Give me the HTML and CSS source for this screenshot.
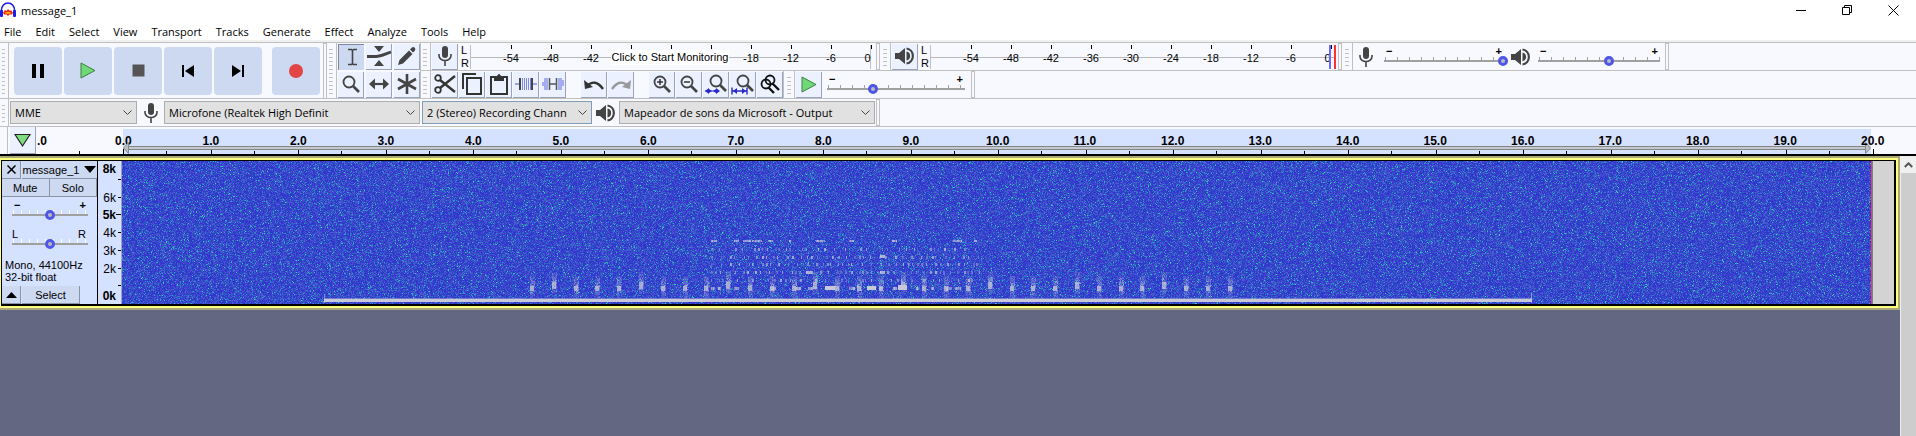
FILE: index.html
```html
<!DOCTYPE html>
<html lang="en">
<head>
<meta charset="utf-8">
<title>message_1</title>
<link rel="stylesheet" href="styles.css">
</head>
<body>
<svg class="defs" aria-hidden="true">
  <symbol id="mic" viewBox="0 0 14 20"><rect x="4" y="0" width="6" height="12" rx="3" fill="#444"/><path d="M1 8v1.500a6 5 0 0 0 12 0V8M7 15v5" fill="none" stroke="#444" stroke-width="1.600"/></symbol>
  <symbol id="speaker" viewBox="0 0 19 18"><path d="M0 6h4l6-5v16l-6-5H0z" fill="#444"/><path d="M11.500 4.500a4.600 4.600 0 0 1 0 9z" fill="#444"/><path d="M11.500 1.500a7.600 7.600 0 0 1 0 15" fill="none" stroke="#444" stroke-width="2.200"/></symbol>
  <symbol id="play" viewBox="0 0 16 17"><path d="M1 1l14 7.500L1 16z" fill="#6fd877" stroke="#3f7f45"/></symbol>
  <symbol id="lens" viewBox="0 0 20 20"><circle cx="8" cy="8" r="5.500" fill="none" stroke="#444" stroke-width="1.800"/><path d="M12 12l6 6" stroke="#444" stroke-width="2.600"/></symbol>
</svg>

<header class="titlebar">
  <svg class="logo" width="16" height="16" viewBox="0 0 16 16"><path d="M1.500 10V8a6.500 7 0 0 1 13 0v2" fill="none" stroke="#1d1de0" stroke-width="1.600"/><rect x="0" y="8" width="3" height="7" rx="1" fill="#1d1de0"/><rect x="13" y="8" width="3" height="7" rx="1" fill="#1d1de0"/><path d="M3 11l2-3 1.500 1L8 7l2 2 1-1 2 3-2 2-1-1-2 2-2-2-1 1z" fill="#f01b12"/><path d="M4 11l4-1.500 4 1.500-4 1z" fill="#ffb300"/></svg>
  <h1>message_1</h1>
  <div class="winbtns">
    <button aria-label="Minimize"><svg width="11" height="11"><path d="M0 5.500h10" stroke="#000"/></svg></button>
    <button aria-label="Restore"><svg width="11" height="11"><path d="M.5 2.500h7v7h-7zM2.500 2.500v-2h7v7h-2" fill="none" stroke="#000"/></svg></button>
    <button aria-label="Close"><svg width="11" height="11"><path d="M.5.5l10 10M10.500.5l-10 10" stroke="#000"/></svg></button>
  </div>
</header>
<nav class="menu">
  <button>File</button><button>Edit</button><button>Select</button><button>View</button><button>Transport</button><button>Tracks</button><button>Generate</button><button>Effect</button><button>Analyze</button><button>Tools</button><button>Help</button>
</nav>

<div class="dock">
  <div class="bar transport">
    <i class="grip"></i>
    <div class="big-buttons">
      <button aria-label="Pause"><svg width="14" height="14"><path d="M1 0h4v14H1zM9 0h4v14H9z"/></svg></button>
      <button aria-label="Play"><svg width="16" height="17"><use href="#play"/></svg></button>
      <button aria-label="Stop"><svg width="13" height="13"><path d="M.5.5h12v12H.5z" fill="#555"/></svg></button>
      <button aria-label="Skip to start"><svg width="14" height="14"><path d="M1 1h2v12H1zM13 1v12L4 7z"/></svg></button>
      <button aria-label="Skip to end"><svg width="14" height="14"><path d="M11 1h2v12h-2zM1 1v12l9-6z"/></svg></button>
      <button class="record" aria-label="Record"><svg width="14" height="14"><circle cx="7" cy="7" r="7" fill="#e24545"/></svg></button>
    </div>
  </div>
  <div class="bar tools">
    <i class="grip"></i>
    <div class="tool-grid">
      <button class="tb on" aria-label="Selection tool"><svg width="20" height="20"><path d="M6 2.500h3.500l1 1 1-1H15M6 17.500h3.500l1-1 1 1H15M10.500 3v14" fill="none" stroke="#444" stroke-width="1.600"/></svg></button>
      <button class="tb" aria-label="Envelope tool"><svg width="24" height="20"><path d="M7 0h10l-5 6zM7 20h10l-5-6z" fill="#444"/><path d="M0 10.500h9C14 10.500 18 8 24 6" fill="none" stroke="#444" stroke-width="2.800"/></svg></button>
      <button class="tb" aria-label="Draw tool"><svg width="20" height="20"><path d="M1 19l1.500-5L12 4.500 15.500 8 6 17.500zM13 3.500l2-2q1.500-1 2.700.3t.3 2.700l-2 2z" fill="#444"/></svg></button>
      <button class="tb" aria-label="Zoom tool"><svg width="20" height="20"><use href="#lens"/></svg></button>
      <button class="tb" aria-label="Time shift tool"><svg width="22" height="14"><path d="M5 7h12" stroke="#444" stroke-width="2.200"/><path d="M1 7l6-5.500v11zM21 7l-6-5.500v11z" fill="#444"/></svg></button>
      <button class="tb" aria-label="Multi tool"><svg width="20" height="20"><path d="M10 0v20M1 5l18 10M1 15l18-10" stroke="#444" stroke-width="2.600"/></svg></button>
    </div>
  </div>
  <div class="rows">
    <div class="row">
      <div class="bar">
        <i class="grip"></i>
        <button class="tb" aria-label="Record meter"><svg width="14" height="20"><use href="#mic"/></svg></button>
        <div class="lr"><span>L</span><span>R</span></div>
        <div class="meter">
          <span>-54</span><span>-48</span><span>-42</span><span>-36</span><span>-30</span><span>-24</span><span>-18</span><span>-12</span><span>-6</span><span class="zero">0</span>
          <button class="monitor">Click to Start Monitoring</button>
        </div>
      </div>
      <div class="bar">
        <i class="grip"></i>
        <button class="tb" aria-label="Playback meter"><svg width="19" height="18"><use href="#speaker"/></svg></button>
        <div class="lr"><span>L</span><span>R</span></div>
        <div class="meter play-meter">
          <span>-54</span><span>-48</span><span>-42</span><span>-36</span><span>-30</span><span>-24</span><span>-18</span><span>-12</span><span>-6</span><span class="zero">0</span>
          <i class="peak"></i><i class="clip"></i>
        </div>
      </div>
      <div class="bar mixer">
        <i class="grip"></i>
        <svg class="mix-mic" width="14" height="20"><use href="#mic"/></svg>
        <label class="slider rec"><span class="ends"><b>−</b><b>+</b></span><input type="range" min="0" max="100" value="100" aria-label="Recording volume"></label>
        <svg class="mix-spk" width="19" height="18"><use href="#speaker"/></svg>
        <label class="slider out"><span class="ends"><b>−</b><b>+</b></span><input type="range" min="0" max="100" value="59" aria-label="Playback volume"></label>
      </div>
    </div>
    <div class="row">
      <div class="bar edit">
        <i class="grip"></i>
        <div class="group">
          <button class="tb" aria-label="Cut"><svg width="22" height="20"><path d="M6 6l15 12M6 14L21 2" stroke="#333" stroke-width="2.400"/><circle cx="4" cy="4" r="2.800" fill="none" stroke="#333" stroke-width="1.800"/><circle cx="4" cy="16" r="2.800" fill="none" stroke="#333" stroke-width="1.800"/></svg></button>
          <button class="tb" aria-label="Copy"><svg width="20" height="22"><path d="M1 16V1h13M5 5h14v16H5z" fill="none" stroke="#333" stroke-width="2"/></svg></button>
          <button class="tb" aria-label="Paste"><svg width="20" height="22"><path d="M2 4h16v17H2z" fill="none" stroke="#333" stroke-width="2"/><path d="M5 3h3q2-4 4 0h3v5H5z" fill="#333"/></svg></button>
          <button class="tb" aria-label="Trim"><svg width="22" height="16"><path d="M0 8h5M17 8h5" stroke="#7d8ae8" stroke-width="1.500"/><path d="M5 2v12M17 2v12" stroke="#444" stroke-width="2"/><path d="M7.500 2v12M9.500 2v12M11.500 2v12M13.500 2v12M15.500 2v12" stroke="#7d8ae8"/></svg></button>
          <button class="tb" aria-label="Silence"><svg width="22" height="16"><path d="M1 10V6M3 14V2M5 14V2M17 14V2M19 14V2M21 10V4" stroke="#7d8ae8" stroke-width="1.300"/><path d="M7.500 2v12M14.500 2v12M8 8h6" stroke="#555" stroke-width="1.500"/></svg></button>
        </div>
        <div class="group">
          <button class="tb" aria-label="Undo"><svg width="22" height="14"><path d="M4 9q8-8 16 3" fill="none" stroke="#333" stroke-width="2.400"/><path d="M1 3l1 9 8-2z" fill="#333"/></svg></button>
          <button class="tb" aria-label="Redo"><svg width="22" height="14"><path d="M18 9Q10 1 2 12" fill="none" stroke="#999" stroke-width="2.400"/><path d="M21 3l-1 9-8-2z" fill="#999"/></svg></button>
        </div>
        <div class="group">
          <button class="tb" aria-label="Zoom in"><svg width="20" height="20"><use href="#lens"/><path d="M5 8h6M8 5v6" stroke="#333" stroke-width="1.500"/></svg></button>
          <button class="tb" aria-label="Zoom out"><svg width="20" height="20"><use href="#lens"/><path d="M5 8h6" stroke="#333" stroke-width="1.500"/></svg></button>
          <button class="tb" aria-label="Fit selection"><svg width="24" height="22"><g transform="translate(4)"><use href="#lens" width="20" height="20"/></g><path d="M1 18h14" stroke="#2a2ac8"/><path d="M1 18l4-3v6zM8 18l-3-2v4zM9 18l3-2v4zM16 18l-4-3v6z" fill="#2a2ac8"/></svg></button>
          <button class="tb" aria-label="Fit project"><svg width="24" height="22"><g transform="translate(4)"><use href="#lens" width="20" height="20"/></g><path d="M1 18h15M1 14.500v7M16 14.500v7" stroke="#2a2ac8" stroke-width="1.400"/><path d="M2 18l4-3v6zM15 18l-4-3v6z" fill="#2a2ac8"/></svg></button>
          <button class="tb" aria-label="Zoom toggle"><svg width="20" height="20" fill="none" stroke="#111" stroke-width="1.800"><circle cx="10" cy="6" r="4.500"/><circle cx="6" cy="10" r="4.500"/><path d="M12 9l7 7M8 13l6 6" stroke-width="2.400"/></svg></button>
        </div>
      </div>
      <div class="bar speed">
        <i class="grip"></i>
        <button class="tb" aria-label="Play at speed"><svg width="16" height="17"><use href="#play"/></svg></button>
        <label class="slider spd"><span class="ends"><b>−</b><b>+</b></span><input type="range" min="0" max="100" value="32" aria-label="Playback speed"></label>
      </div>
    </div>
  </div>
</div>
<div class="row devices">
  <div class="bar">
    <i class="grip"></i>
    <select class="host" aria-label="Audio host"><option>MME</option></select>
    <svg class="dev-mic" width="14" height="20"><use href="#mic"/></svg>
    <select class="wide" aria-label="Recording device"><option>Microfone (Realtek High Definit</option></select>
    <select class="chan" aria-label="Recording channels"><option>2 (Stereo) Recording Chann</option></select>
    <svg class="dev-spk" width="19" height="18"><use href="#speaker"/></svg>
    <select class="wide" aria-label="Playback device"><option>Mapeador de sons da Microsoft - Output</option></select>
  </div>
</div>

<div class="timeline">
  <div class="pin"><button class="tb" aria-label="Pinned play head"><svg width="17" height="15"><path d="M1 1.500h15L8.500 13z" fill="#7fdc80" stroke="#222" stroke-width="1.200"/></svg></button></div>
  <div class="lead"><span>.0</span></div>
  <div class="ruler">
    <div class="seconds"><span>0.0</span><span>1.0</span><span>2.0</span><span>3.0</span><span>4.0</span><span>5.0</span><span>6.0</span><span>7.0</span><span>8.0</span><span>9.0</span><span>10.0</span><span>11.0</span><span>12.0</span><span>13.0</span><span>14.0</span><span>15.0</span><span>16.0</span><span>17.0</span><span>18.0</span><span>19.0</span></div>
    <div class="loop"><svg width="6" height="12"><path d="M5.500.5v11L.5 6z" fill="#c0c0c0" stroke="#888"/></svg><i></i><svg width="6" height="12"><path d="M.5.5v11L5.500 6z" fill="#c0c0c0" stroke="#888"/></svg></div>
  </div>
  <div class="tail"><span>20.0</span></div>
</div>

<main class="workspace">
  <div class="tracks">
    <section class="track">
      <div class="panel">
        <div class="pair head"><button aria-label="Close track"><svg width="9" height="9"><path d="M.5.5l8 8M8.500.5l-8 8" stroke="#000" stroke-width="1.500"/></svg></button><button class="name">message_1<svg width="12" height="7"><path d="M0 0h12L6 7z"/></svg></button></div>
        <div class="pair half"><button>Mute</button><button>Solo</button></div>
        <label class="slider trk"><span class="ends"><b>−</b><b>+</b></span><input type="range" value="50" aria-label="Gain"></label>
        <label class="slider trk pan"><span class="ends"><span>L</span><span>R</span></span><input type="range" value="50" aria-label="Pan"></label>
        <p>Mono, 44100Hz<br>32-bit float</p>
        <div class="pair foot"><button aria-label="Collapse"><svg width="11" height="6"><path d="M0 6h11L5.500 0z"/></svg></button><button class="sel">Select</button></div>
      </div>
      <svg class="freq" width="24" height="143" text-anchor="end">
        <path d="M20 18.500h4M20 36.500h4M18 53.500h6M20 71.500h4M20 89.500h4M20 107.500h4M20 124.500h4" stroke="#000"/>
        <text x="18" y="12" class="strong">8k</text><text x="18" y="41">6k</text><text x="18" y="58" class="strong">5k</text><text x="18" y="76">4k</text><text x="18" y="94">3k</text><text x="18" y="112">2k</text><text x="18" y="139" class="strong">0k</text>
      </svg>
      <div class="clip-view"><canvas id="spectrogram" width="1749" height="143"></canvas></div>
      <div class="after"></div>
    </section>
  </div>
  <div class="scrollbar"><button aria-label="Scroll up"><svg width="9" height="6"><path d="M.8 5L4.500 1.300 8.200 5" fill="none" stroke="#555" stroke-width="2"/></svg></button></div>
</main>
<script src="spectrogram.js"></script>
</body>
</html>
```
FILE: styles.css
```css
* { box-sizing: border-box; }
body { margin: 0; height: 100vh; display: flex; flex-direction: column; overflow: hidden; background: #fff; color: #000; font: 11px "Open Sans", "Noto Sans", sans-serif; }
button { margin: 0; padding: 0; border: 0; background: none; color: inherit; font: inherit; display: flex; align-items: center; justify-content: center; }
svg { display: block; flex: none; }
.defs { position: absolute; width: 0; height: 0; }

.titlebar { display: flex; align-items: center; height: 20px; gap: 5px; flex: none; }
.titlebar h1 { margin: 0; font-size: 11px; font-weight: 400; }
.winbtns { margin-left: auto; display: flex; }
.winbtns button { width: 46px; height: 20px; }
.menu { display: flex; flex: none; height: 22px; padding: 2px 4px 0; gap: 14px; border-bottom: 2px solid #f0f0f0; }

.dock { display: flex; flex: none; background: #f8f9ff; border-top: 1px solid #c0c0c0; }
.bar { display: flex; align-items: center; border-right: 1px solid #c0c0c0; margin-right: 3px; box-shadow: 3px 0 0 -1px #f8f9ff, 3px 0 0 #c0c0c0; }
.bar + .bar { margin-left: 1px; }
.grip { flex: none; width: 10px; margin-right: 1px; align-self: stretch; border-right: 1px solid #c0c0c0; background: repeating-linear-gradient(#f8f9ff 0 3px, #c0c0c0 3px 4px) content-box; padding: 3px 3px 3px 2px; }
.transport { border-bottom: 1px solid #c0c0c0; height: 56px; }
.transport .grip { width: 9px; }
.big-buttons { display: flex; gap: 2px; padding: 0 3px 0 4px; }
.big-buttons button { width: 48px; height: 48px; border-radius: 4px; background: #cdd9f1; }
.big-buttons .record { margin-left: 8px; }
.bar.tools { height: 56px; border-bottom: 1px solid #c0c0c0; margin: 0; box-shadow: none; }
.tool-grid { display: grid; grid-template-columns: repeat(3, 26px); gap: 2px; }
.tb { width: 26px; height: 26px; background: #ebf1ff; border-right: 1px solid #9aa3bb; border-bottom: 1px solid #9aa3bb; flex: none; }
.tb.on { background: #cdd9f1; border: 0; border-top: 1px solid #7d86a0; border-left: 1px solid #7d86a0; }

.rows { flex: 1; }
.row { display: flex; height: 28px; border-bottom: 1px solid #c0c0c0; background: #f8f9ff; }
.lr { font: 11px/13px "Liberation Sans", Arial, sans-serif; display: flex; flex-direction: column; width: 12px; padding-left: 3px; }
.meter { position: relative; display: flex; width: 401px; height: 24px; padding-left: 20px; margin-right: 5px; font: 11px/13px "Liberation Sans", Arial, sans-serif; border: solid #c0c0c0; border-width: 0 1px; background: linear-gradient(#b8b8b8, #b8b8b8) 0 12px / 100% 1px no-repeat; }
.meter span { width: 40px; flex: none; text-align: center; padding-top: 7px; background: linear-gradient(#000, #000) 50% 0 / 1px 4px no-repeat; }
.meter .zero { text-indent: -7px; }
.monitor { position: absolute; left: 140px; top: 5px; width: 118px; height: 15px; background: #fff; white-space: nowrap; }
.play-meter { width: 406px; border-right: 0; margin-right: 2px; }
.peak, .clip { position: absolute; top: 0; height: 24px; width: 2px; background: #6a6aff; right: 5px; }
.clip { background: #ff3030; right: 0; }

.slider { display: block; font: 11px/8px "Liberation Sans", Arial, sans-serif; }
.ends { display: flex; justify-content: space-between; padding: 0 2px; }
.slider input { appearance: none; display: block; margin: 0; width: 100%; height: 11px; background: linear-gradient(#a0a0a0, #a0a0a0) 0 5px / 100% 2px no-repeat, repeating-linear-gradient(90deg, #a0a0a0 0 1px, transparent 1px 12px) 1px 2px / 100% 3px no-repeat; }
.slider input::-webkit-slider-thumb { appearance: none; width: 10px; height: 10px; border-radius: 50%; border: 3px solid #4d56e8; background: #bbb; }
.rec { width: 124px; }
.rec .ends { padding-right: 6px; }
.out { width: 122px; }
.spd { width: 138px; margin: 0 6px 0 5px; }
.mix-mic { margin: 0 11px 0 5px; }
.mix-spk { margin: 0 8px 0 3px; }
.mixer { padding-right: 5px; }
.edit { margin-right: 0; box-shadow: none; }
.group { display: flex; gap: 1px; margin-right: 15px; }
.group:last-child { margin-right: 0; }

.devices { flex: none; }
.devices .bar { padding-right: 1px; }
.devices .grip { width: 9px; }
select { appearance: none; height: 23px; padding: 0 4px; border: 1px solid #adadad; border-radius: 0; color: #000; font: inherit; background: #e1e1e1 url("data:image/svg+xml,%3Csvg xmlns='http://www.w3.org/2000/svg' width='9' height='6'%3E%3Cpath d='M.5.5l4 4 4-4' fill='none' stroke='%23444'/%3E%3C/svg%3E") right 4px center no-repeat; }
.host { width: 127px; }
.wide { width: 256px; }
.chan { width: 170px; margin-left: 2px; border-color: #7f9db9; }
.dev-mic { margin: 0 6px 0 7px; }
.dev-spk { margin: 0 4px; }

.timeline { flex: none; display: flex; height: 29px; border-bottom: 2px solid #000; background: #f8f9ff; font: bold 12px/14px "Liberation Sans", Arial, sans-serif; }
.pin { width: 36px; padding-left: 10px; background: linear-gradient(#c0c0c0, #c0c0c0) 7px 0 / 1px 100% no-repeat; }
.pin .tb { height: 27px; }
.lead { width: 87px; padding: 7px 1px; background: linear-gradient(#000, #000) 43px 100% / 1px 3px no-repeat; }
.ruler { flex: 1; position: relative; background: linear-gradient(#d4e1ff, #d4e1ff) 0 2px / calc(100% - 2px) 100% no-repeat; }
.seconds { display: flex; height: 27px; }
.seconds span { flex: 1 1 0; padding-top: 7px; text-indent: -8px; background: linear-gradient(#000, #000) 0 100% / 1px 5px no-repeat, linear-gradient(#000, #000) 50% 100% / 1px 3px no-repeat; }
.seconds span:nth-child(n+11) { text-indent: -12px; }
.loop { position: absolute; left: 0; right: 2px; top: 15px; display: flex; align-items: center; }
.loop i { flex: 1; height: 4px; border: solid #858585; border-width: 1px 0; background: #c4c8d2; }
.tail { position: relative; width: 43px; padding-top: 7px; text-indent: -12px; background: linear-gradient(#000, #000) 0 100% / 1px 5px no-repeat; }

.workspace { flex: 1; display: flex; background: #646782; }
.tracks { flex: 1; padding-top: 1px; }
.track { display: flex; border: solid #000; border-width: 1px 2px 2px 1px; margin: 3px 4px 4px 1px; box-shadow: 0 0 0 2px #ffff80, 0 0 0 4px #a8a878; }
.panel { width: 96px; flex: none; background: #d4e1ff; border-right: 1px solid #000; font: 11px/12px "Liberation Sans", Arial, sans-serif; display: flex; flex-direction: column; }
.pair { display: flex; flex: none; height: 18px; }
.pair button { border-right: 1px solid #8b93a8; border-bottom: 1px solid #8b93a8; background: #cdd9f1; width: 19px; }
.pair .name { flex: 1; margin-left: 1px; gap: 5px; border-right: 0; }
.half button { flex: 1; }
.trk { width: 76px; margin: 4px 0 0 10px; }
.trk input { background: linear-gradient(#a0a0a0, #a0a0a0) 0 5px / 100% 2px no-repeat, repeating-linear-gradient(90deg, #fff 0 1px, transparent 1px 8px) 1px 1px / 100% 4px no-repeat; }
.pan { margin-top: 10px; }
.pan .ends { padding-left: 0; }
.panel p { margin: auto 0 3px 3px; }
.foot .sel { width: 58px; margin-left: 1px; }
.freq { background: #d4e1ff; font: 12px "Liberation Sans", Arial, sans-serif; border-right: 1px solid #a0a4b8; }
.strong { font-weight: 700; }
.clip-view { flex: 1; min-width: 0; background: #333ccc; border-right: 1px solid #e04070; }
.clip-view canvas { display: block; width: 100%; height: 143px; image-rendering: pixelated; }
.after { flex: none; width: 22px; background: #d3d3d3; border-left: 1px solid #808080; }
.scrollbar { width: 16px; background: #cdcdcd; border-left: 1px solid #f0f0f0; }
.scrollbar button { width: 100%; height: 17px; background: #f0f0f0; }
```
FILE: spectrogram.js
```js
(function () {
  var canvas = document.getElementById('spectrogram');
  var ctx = canvas.getContext('2d');
  var W = canvas.width, H = canvas.height;
  var image = ctx.createImageData(W, H);
  var seed = 20211;
  function rnd() {
    seed = (seed * 1664525 + 1013904223) >>> 0;
    return seed / 4294967296;
  }

  // Background noise floor
  for (var p = 0; p < W * H; p++) {
    var r = rnd(), v = rnd(), c;
    if (r < 0.56) c = [46 + v * 8, 50 + v * 16, 204];
    else if (r < 0.76) c = [66 + v * 20, 70 + v * 20, 208];
    else if (r < 0.93) c = [48, 84 + v * 40, 198];
    else if (r < 0.985) c = [46, 130 + v * 40, 196];
    else c = [56, 180 + v * 40, 170];
    image.data[p * 4] = c[0];
    image.data[p * 4 + 1] = c[1];
    image.data[p * 4 + 2] = c[2];
    image.data[p * 4 + 3] = 255;
  }
  ctx.putImageData(image, 0, 0);

  function mark(x, y, w, h, alpha) {
    ctx.fillStyle = 'rgba(200,200,216,' + alpha + ')';
    ctx.fillRect(x, y, w, h);
  }

  // Low hum
  mark(202, 138, 1208, 3, 1);
  mark(202, 137, 1208, 1, 0.4);
  mark(202, 133, 1, 9, 0.5);
  mark(1409, 132, 1, 10, 0.6);

  // Regular pulses, every fourth one pitched higher
  for (var i = 0; i < 33; i++) {
    var x = Math.round(408 + i * 21.8), high = i % 4 === 1;
    var y = high ? 121 : 125;
    for (var dy = -10; dy < 12; dy++) {
      for (var dx = 0; dx < 5; dx++) {
        if (y + dy < 137) mark(x + dx, y + dy, 1, 1, rnd() * (0.7 - Math.abs(dy) * 0.04));
      }
    }
    mark(x, y, 4, high ? 7 : 5, 0.7);
  }

  // Tone rows carrying the message: [start, length] from the row's left edge
  var rows = [
    [[0, 6], [23, 5], [32, 8], [41, 10], [58, 4], [78, 2], [105, 9], [138, 5], [181, 5], [242, 9], [263, 3]],
    null, null, null, null, null,
    [[0, 4], [7, 3], [23, 5], [60, 5], [83, 7], [97, 5], [138, 6], [168, 3], [182, 4], [205, 3], [220, 3], [235, 6], [244, 6]]
  ];
  rows.forEach(function (row, n) {
    var y = [79, 87, 95, 102, 110, 118, 126][n];
    if (row) {
      row.forEach(function (s) {
        for (var k = 0; k < s[1]; k++) mark(589 + s[0] + k, y, 1, n ? 3 : 2, 0.4 + rnd() * 0.5);
      });
      return;
    }
    for (var x = 589; x < 858; x += 3 + Math.floor(rnd() * (n === 1 || n === 5 ? 14 : 8))) {
      mark(x, y, 1 + Math.floor(rnd() * 2), 3, 0.25 + rnd() * 0.5);
    }
  });
  mark(703, 125, 10, 4, 1);
  mark(745, 125, 9, 4, 1);
  mark(776, 124, 9, 5, 1);
  mark(758, 94, 5, 3, 0.8);
  mark(758, 110, 5, 3, 0.8);
  mark(684, 110, 6, 3, 0.8);
})();
```
